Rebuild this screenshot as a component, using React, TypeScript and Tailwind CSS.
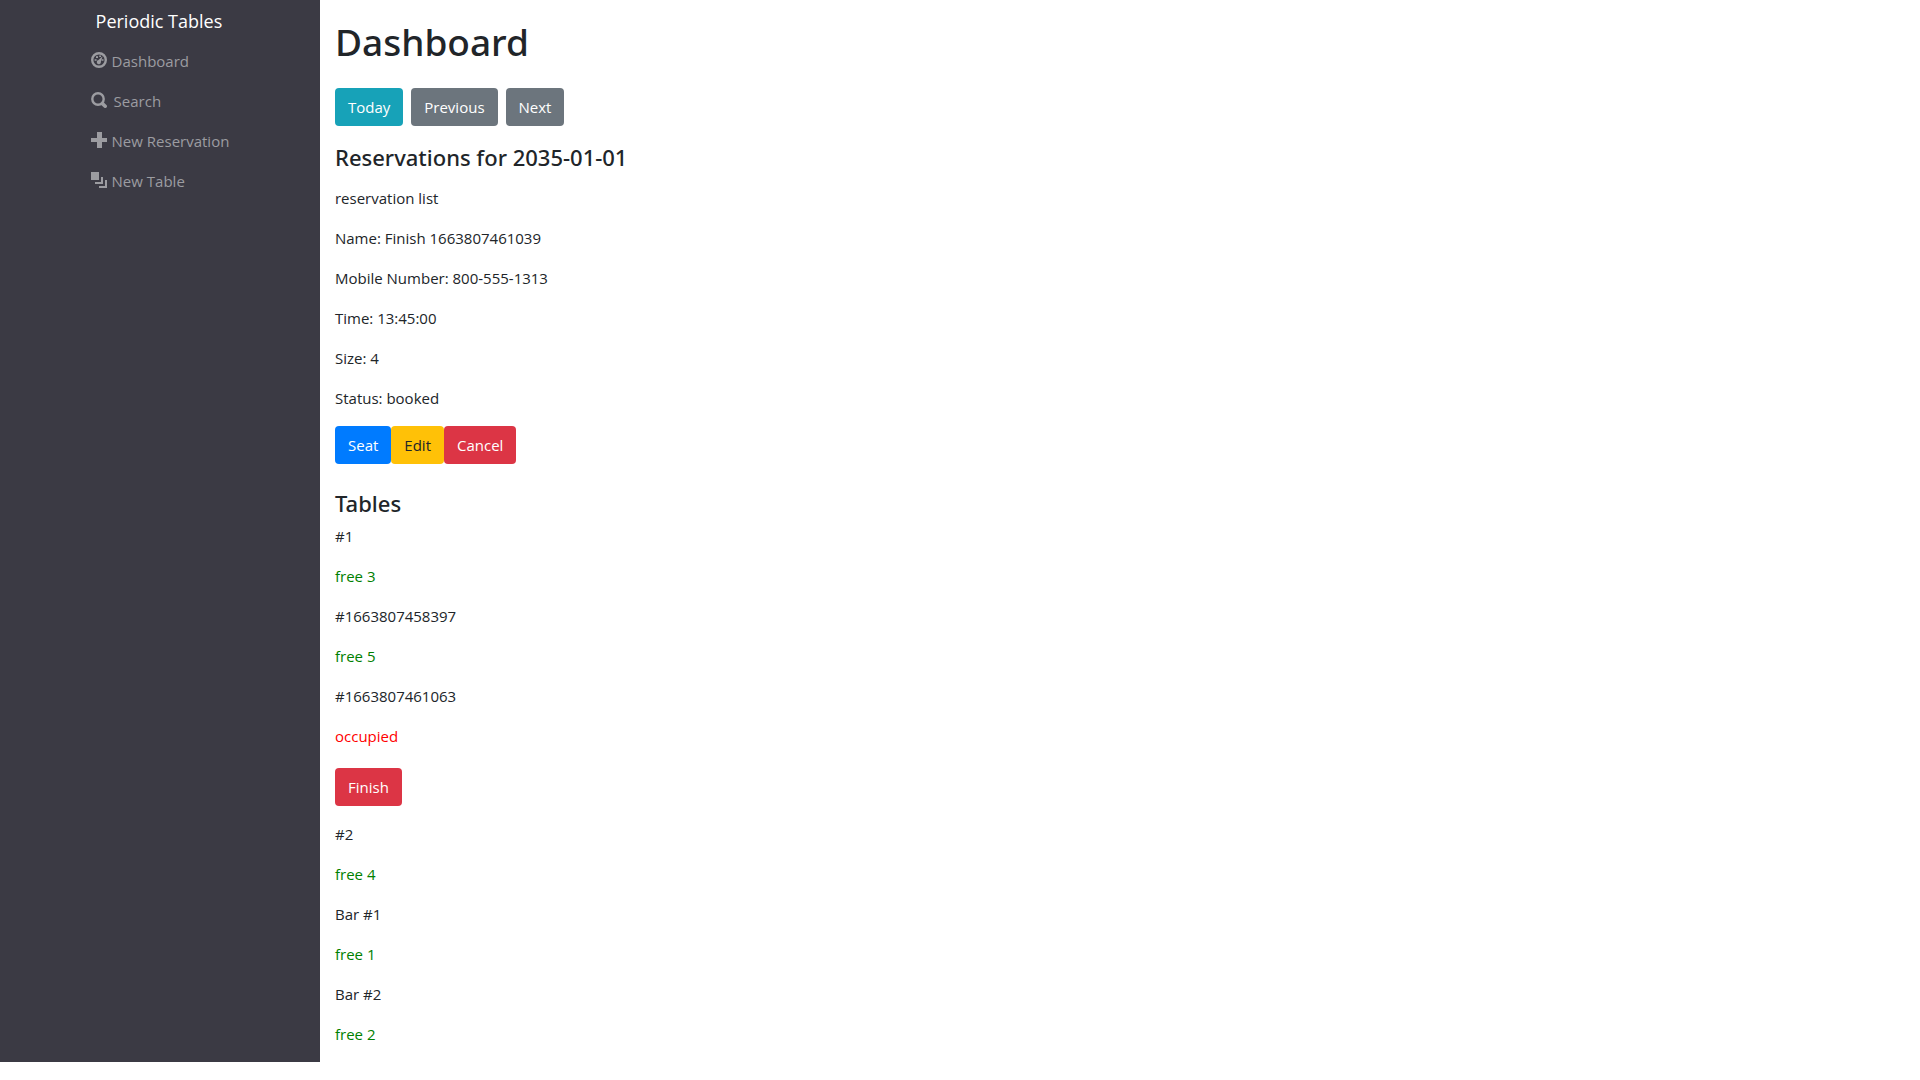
import type { ReactNode } from "react";

function DashboardIcon() {
  return (
    <svg viewBox="0 0 16 16" className="size-4 shrink-0" aria-hidden="true">
      <circle cx="8" cy="8" r="6.8" fill="none" stroke="currentColor" strokeWidth="2.4" />
      <path d="M3.6 7.2h2v1.6h-2zM5 4.2h2v1.8H5zM8.2 3.4h1.8v1.6H8.2zM10.6 7.2h1.9v1.6h-1.9z" fill="currentColor" />
      <path d="M11.6 4.2 9.9 9.6a2.1 2.1 0 1 1-2.4-1.6z" fill="currentColor" />
    </svg>
  );
}

function SearchIcon() {
  return (
    <svg viewBox="0 0 16 16" className="mr-0.5 size-4 shrink-0" aria-hidden="true">
      <circle cx="7" cy="7" r="5.7" fill="none" stroke="currentColor" strokeWidth="2.4" />
      <path d="m11.4 11.6 2.8 2.6" stroke="currentColor" strokeWidth="3.6" strokeLinecap="round" />
    </svg>
  );
}

function PlusIcon() {
  return (
    <svg viewBox="0 0 16 16" className="size-4 shrink-0" aria-hidden="true">
      <path d="M6 0h5v6h5v4h-5v6H6v-6H0V6h6z" fill="currentColor" />
    </svg>
  );
}

function LayersIcon() {
  return (
    <svg viewBox="0 0 16 16" className="size-4 shrink-0" aria-hidden="true">
      <path d="M0 0h8v8H0zM10 5h2v7H4v-2h6zM14 8h2v8H8v-2h6z" fill="currentColor" />
    </svg>
  );
}

const links: { label: string; icon: ReactNode }[] = [
  { label: "Dashboard", icon: <DashboardIcon /> },
  { label: "Search", icon: <SearchIcon /> },
  { label: "New Reservation", icon: <PlusIcon /> },
  { label: "New Table", icon: <LayersIcon /> },
];

const tones = {
  info: "bg-[#17a2b8] text-white",
  secondary: "bg-[#6c757d] text-white",
  primary: "bg-[#007bff] text-white",
  warning: "bg-[#ffc107] text-[#212529]",
  danger: "bg-[#dc3545] text-white",
};

function Button({ tone, children }: { tone: keyof typeof tones; children: ReactNode }) {
  return (
    <button type="button" className={`h-[38px] rounded px-[13px] ${tones[tone]}`}>
      {children}
    </button>
  );
}

const reservation = [
  "Name: Finish 1663807461039",
  "Mobile Number: 800-555-1313",
  "Time: 13:45:00",
  "Size: 4",
  "Status: booked",
];

const tables = [
  { name: "#1", capacity: 3, occupied: false },
  { name: "#1663807458397", capacity: 5, occupied: false },
  { name: "#1663807461063", capacity: 1, occupied: true },
  { name: "#2", capacity: 4, occupied: false },
  { name: "Bar #1", capacity: 1, occupied: false },
  { name: "Bar #2", capacity: 2, occupied: false },
];

export default function App() {
  return (
    <div className="flex bg-white font-['Open_Sans','Noto_Sans',sans-serif] text-[15px] leading-6 text-[#212529]">
      <nav className="flex w-1/6 shrink-0 flex-col items-center bg-[#3b3a44]">
        <div>
          <a href="#" className="mt-1.5 block pl-[5px] text-lg leading-[30px] text-white">
            Periodic Tables
          </a>
          <ul className="mt-1">
            {links.map((link) => (
              <li key={link.label}>
                <a href="#" className="flex h-10 items-center gap-[5px] text-[#9c9ca1]">
                  {link.icon}
                  <span className="pt-0.5">{link.label}</span>
                </a>
              </li>
            ))}
          </ul>
        </div>
      </nav>
      <main className="flex-1 px-[15px] pb-4">
        <h1 className="pt-[18px] font-['Noto_Sans',sans-serif] text-[37px] leading-[48px] font-medium">Dashboard</h1>
        <div className="mt-[22px] flex gap-2">
          <Button tone="info">Today</Button>
          <Button tone="secondary">Previous</Button>
          <Button tone="secondary">Next</Button>
        </div>
        <h2 className="mt-4 font-['Noto_Sans',sans-serif] text-[22px] leading-[30px] font-medium">Reservations for 2035-01-01</h2>
        <div className="mt-3.5 space-y-4">
          <p>reservation list</p>
          {reservation.map((line) => (
            <p key={line}>{line}</p>
          ))}
        </div>
        <div className="mt-4 flex">
          <Button tone="primary">Seat</Button>
          <Button tone="warning">Edit</Button>
          <Button tone="danger">Cancel</Button>
        </div>
        <h2 className="mt-6 font-['Noto_Sans',sans-serif] text-[22px] leading-[30px] font-medium">Tables</h2>
        <div className="mt-1.5 space-y-4">
          {tables.map((table) => (
            <section key={table.name} className="space-y-4">
              <p>{table.name}</p>
              {table.occupied ? (
                <>
                  <p className="text-[#ff0000]">occupied</p>
                  <div className="pt-1">
                    <Button tone="danger">Finish</Button>
                  </div>
                </>
              ) : (
                <p className="text-[#008000]">free {table.capacity}</p>
              )}
            </section>
          ))}
        </div>
      </main>
    </div>
  );
}
